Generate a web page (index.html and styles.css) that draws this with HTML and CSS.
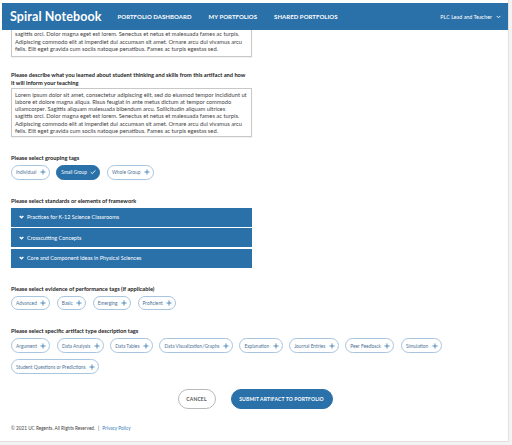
FILE: index.html
```html
<!DOCTYPE html>
<html lang="en">
<head>
<meta charset="utf-8">
<title>Spiral Notebook</title>
<link rel="stylesheet" href="styles.css">
</head>
<body>
<div class="frame">
  <header class="topbar">
    <div class="brand">Spiral Notebook</div>
    <nav class="nav">
      <a class="nav-link">PORTFOLIO DASHBOARD</a>
      <a class="nav-link">MY PORTFOLIOS</a>
      <a class="nav-link">SHARED PORTFOLIOS</a>
    </nav>
    <div class="user">PLC Lead and Teacher
      <svg class="user-chev" width="5" height="4" viewBox="0 0 5 4"><path d="M0.6 0.9 L2.5 2.8 L4.4 0.9" fill="none" stroke="#fff" stroke-width="0.9"/></svg>
    </div>
  </header>

  <main class="content">
    <div class="textbox textbox--clipped">sagittis orci. Dolor magna eget est lorem. Senectus et netus et malesuada fames ac turpis.<br>Adipiscing commodo elit at imperdiet dui accumsan sit amet. Ornare arcu dui vivamus arcu<br>felis. Elit eget gravida cum sociis natoque penatibus. Fames ac turpis egestas sed.</div>

    <section class="field field--first">
      <div class="q">Please describe what you learned about student thinking and skills from this artifact and how<br>it will inform your teaching</div>
      <div class="textbox">Lorem ipsum dolor sit amet, consectetur adipiscing elit, sed do eiusmod tempor incididunt ut<br>labore et dolore magna aliqua. Risus feugiat in ante metus dictum at tempor commodo<br>ullamcorper. Sagittis aliquam malesuada bibendum arcu. Sollicitudin aliquam ultrices<br>sagittis orci. Dolor magna eget est lorem. Senectus et netus et malesuada fames ac turpis.<br>Adipiscing commodo elit at imperdiet dui accumsan sit amet. Ornare arcu dui vivamus arcu<br>felis. Elit eget gravida cum sociis natoque penatibus. Fames ac turpis egestas sed.</div>
    </section>

    <section class="field">
      <div class="q">Please select grouping tags</div>
      <div class="tags">
        <span class="tag">Individual <svg class="plus" viewBox="0 0 7 7"><path d="M3.5 0.5V6.5M0.5 3.5H6.5"/></svg></span>
        <span class="tag tag--on">Small Group <svg class="check" viewBox="0 0 7 7"><path d="M0.8 3.6 L2.7 5.4 L6.2 1.6"/></svg></span>
        <span class="tag">Whole Group <svg class="plus" viewBox="0 0 7 7"><path d="M3.5 0.5V6.5M0.5 3.5H6.5"/></svg></span>
      </div>
    </section>

    <section class="field">
      <div class="q">Please select standards or elements of framework</div>
      <div class="acc">
        <div class="acc-row"><svg class="chev" viewBox="0 0 5 4"><path d="M0.7 0.9 L2.5 2.8 L4.3 0.9"/></svg>Practices for K-12 Science Classrooms</div>
        <div class="acc-row"><svg class="chev" viewBox="0 0 5 4"><path d="M0.7 0.9 L2.5 2.8 L4.3 0.9"/></svg>Crosscutting Concepts</div>
        <div class="acc-row"><svg class="chev" viewBox="0 0 5 4"><path d="M0.7 0.9 L2.5 2.8 L4.3 0.9"/></svg>Core and Component Ideas in Physical Sciences</div>
      </div>
    </section>

    <section class="field">
      <div class="q">Please select evidence of performance tags (if applicable)</div>
      <div class="tags">
        <span class="tag">Advanced <svg class="plus" viewBox="0 0 7 7"><path d="M3.5 0.5V6.5M0.5 3.5H6.5"/></svg></span>
        <span class="tag">Basic <svg class="plus" viewBox="0 0 7 7"><path d="M3.5 0.5V6.5M0.5 3.5H6.5"/></svg></span>
        <span class="tag">Emerging <svg class="plus" viewBox="0 0 7 7"><path d="M3.5 0.5V6.5M0.5 3.5H6.5"/></svg></span>
        <span class="tag">Proficient <svg class="plus" viewBox="0 0 7 7"><path d="M3.5 0.5V6.5M0.5 3.5H6.5"/></svg></span>
      </div>
    </section>

    <section class="field">
      <div class="q">Please select specific artifact type description tags</div>
      <div class="tags">
        <span class="tag">Argument <svg class="plus" viewBox="0 0 7 7"><path d="M3.5 0.5V6.5M0.5 3.5H6.5"/></svg></span>
        <span class="tag">Data Analysis <svg class="plus" viewBox="0 0 7 7"><path d="M3.5 0.5V6.5M0.5 3.5H6.5"/></svg></span>
        <span class="tag">Data Tables <svg class="plus" viewBox="0 0 7 7"><path d="M3.5 0.5V6.5M0.5 3.5H6.5"/></svg></span>
        <span class="tag">Data Visualization/Graphs <svg class="plus" viewBox="0 0 7 7"><path d="M3.5 0.5V6.5M0.5 3.5H6.5"/></svg></span>
        <span class="tag">Explanation <svg class="plus" viewBox="0 0 7 7"><path d="M3.5 0.5V6.5M0.5 3.5H6.5"/></svg></span>
        <span class="tag">Journal Entries <svg class="plus" viewBox="0 0 7 7"><path d="M3.5 0.5V6.5M0.5 3.5H6.5"/></svg></span>
        <span class="tag">Peer Feedback <svg class="plus" viewBox="0 0 7 7"><path d="M3.5 0.5V6.5M0.5 3.5H6.5"/></svg></span>
        <span class="tag">Simulation <svg class="plus" viewBox="0 0 7 7"><path d="M3.5 0.5V6.5M0.5 3.5H6.5"/></svg></span>
        <span class="tag">Student Questions or Predictions <svg class="plus" viewBox="0 0 7 7"><path d="M3.5 0.5V6.5M0.5 3.5H6.5"/></svg></span>
      </div>
    </section>

    <div class="actions">
      <button class="btn btn--ghost">CANCEL</button>
      <button class="btn btn--primary">SUBMIT ARTIFACT TO PORTFOLIO</button>
    </div>
  </main>

  <footer class="footer">© 2021 UC Regents. All Rights Reserved.<span class="sep">|</span><a class="footer-link">Privacy Policy</a></footer>
</div>
</body>
</html>
```

FILE: styles.css
```css
* { box-sizing: border-box; }

body {
  margin: 0;
  background: #f3f3f3;
  font-family: Lato, "Noto Sans", sans-serif;
}

.frame {
  width: 509px;
  height: 442px;
  padding: 3px 0 0 2px;
  background: #fff;
  border-right: 1px solid #e2e2e2;
  border-bottom: 1px solid #e2e2e2;
  display: flex;
  flex-direction: column;
}

.topbar {
  height: 27px;
  flex: none;
  background: #2a70a9;
  color: #fff;
  display: flex;
  align-items: center;
  padding: 0 7px 0 8px;
}

.brand {
  font-weight: 700;
  font-size: 12.5px;
  letter-spacing: 0.1px;
}

.nav {
  display: flex;
  gap: 17px;
  margin-left: 16px;
}

.nav-link {
  font-size: 6px;
  font-weight: 700;
  letter-spacing: 0.05px;
}

.user {
  margin-left: auto;
  font-size: 5.4px;
  display: flex;
  align-items: center;
  gap: 4px;
}

.user-chev { display: block; }

.content {
  flex: 1;
  display: flex;
  flex-direction: column;
  padding: 0 9px;
}

.textbox {
  width: 241px;
  border: 1px solid #c8c8c8;
  padding: 2px 3px;
  font-size: 5.75px;
  line-height: 7.2px;
  color: #444;
  white-space: nowrap;
  overflow: hidden;
  box-shadow: 0 1px 1px rgba(0,0,0,0.05);
}

.textbox--clipped {
  border-top: none;
  padding-top: 0;
  padding-bottom: 3px;
  line-height: 7.5px;
}

.field { margin-top: 17px; }
.field--first { margin-top: 14.5px; }

.q {
  font-size: 5.7px;
  font-weight: 700;
  line-height: 7.5px;
  color: #222;
  margin-bottom: 3.6px;
  white-space: nowrap;
}

.field--first .q { margin-bottom: 1.8px; }

.tags {
  display: flex;
  flex-wrap: wrap;
  gap: 6.5px 6.5px;
}

.tag {
  height: 14.5px;
  border: 1px solid #a8c5df;
  border-radius: 8px;
  padding: 0 3px 0 4px;
  display: inline-flex;
  align-items: center;
  gap: 3.5px;
  font-size: 4.8px;
  color: #4d7296;
  background: #fff;
  white-space: nowrap;
}

.plus {
  width: 6px;
  height: 6px;
  fill: none;
  stroke: #2a70a9;
  stroke-width: 0.9;
}

.tag--on {
  background: #2a70a9;
  border-color: #2a70a9;
  color: #fff;
}

.check {
  width: 6px;
  height: 6px;
  fill: none;
  stroke: #fff;
  stroke-width: 1;
}

.acc {
  width: 241px;
  display: flex;
  flex-direction: column;
  gap: 1.5px;
}

.acc-row {
  height: 19px;
  background: #2a70a9;
  color: #fff;
  display: flex;
  align-items: center;
  gap: 3.5px;
  padding-left: 7.5px;
  font-size: 5.5px;
}

.chev {
  width: 5px;
  height: 4px;
  fill: none;
  stroke: #fff;
  stroke-width: 1.4;
}

.actions {
  display: flex;
  justify-content: center;
  gap: 15px;
  margin-top: 15.5px;
}

.btn {
  height: 19.5px;
  border-radius: 10px;
  font-family: inherit;
  font-size: 5px;
  font-weight: 700;
  letter-spacing: 0.15px;
  padding: 0;
  cursor: pointer;
}

.btn--ghost {
  width: 38px;
  background: #fff;
  border: 1px solid #b9b9b9;
  color: #555;
}

.btn--primary {
  width: 102px;
  background: #2a70a9;
  border: 1px solid #2a70a9;
  color: #fff;
}

.footer {
  margin-top: auto;
  padding: 0 0 9px 9px;
  font-size: 4.7px;
  line-height: 7px;
  color: #444;
}

.sep { margin: 0 3px; }

.footer-link { color: #3a7cbc; }
```
